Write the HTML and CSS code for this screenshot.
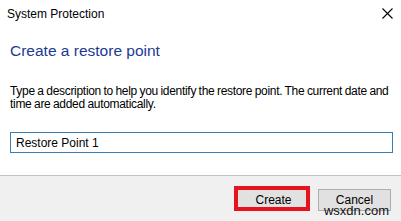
FILE: index.html
```html
<!DOCTYPE html>
<html lang="en">
<head>
    <meta charset="UTF-8">
    <meta name="viewport" content="width=device-width, initial-scale=1.0">
    <title>System Protection</title>
    <link rel="stylesheet" href="styles.css">
</head>
<body>
    <div class="dialog">
        <div class="titlebar">
            <span class="title">System Protection</span>
            <svg class="close" width="11" height="11" viewBox="0 0 11 11">
                <path d="M0.5 0.5 L10.5 10.5 M10.5 0.5 L0.5 10.5" stroke="#000" stroke-width="1.1" fill="none"/>
            </svg>
        </div>
        <div class="content">
            <h1 class="heading">Create a restore point</h1>
            <p class="desc">Type a description to help you identify the restore point. The current date and time are added automatically.</p>
            <input type="text" class="name-input" value="Restore Point 1">
        </div>
        <div class="footer">
            <button class="btn btn-create">Create</button>
            <button class="btn">Cancel</button>
            <span class="watermark">wsxdn.com</span>
        </div>
    </div>
</body>
</html>
```

FILE: styles.css
```css
* {
    box-sizing: border-box;
    margin: 0;
    padding: 0;
}

body {
    font-family: "Liberation Sans", Arial, sans-serif;
    color: #000;
    background: #fff;
    overflow: hidden;
}

.dialog {
    width: 401px;
    height: 221px;
    display: flex;
    flex-direction: column;
}

.titlebar {
    display: flex;
    justify-content: space-between;
    align-items: center;
    height: 27px;
    padding: 0 8px 0 7px;
}

.title {
    font-size: 12px;
    line-height: 16px;
}

.close {
    display: block;
}

.content {
    padding: 0 8px 0 10px;
}

.heading {
    margin-top: 14px;
    font-size: 15.5px;
    line-height: 20px;
    font-weight: normal;
    color: #1c3a94;
}

.desc {
    margin-top: 24px;
    font-size: 12px;
    line-height: 13px;
    letter-spacing: -0.3px;
    word-spacing: -0.5px;
}

.name-input {
    display: block;
    width: 383px;
    height: 21px;
    margin-top: 21px;
    padding: 0 5px;
    border: 1px solid #3a7db3;
    font-family: inherit;
    font-size: 12px;
    color: #000;
    outline: none;
}

.footer {
    position: relative;
    margin-top: auto;
    height: 46px;
    border-top: 1px solid #c2c2c2;
    background: #f0f0f0;
    display: flex;
    justify-content: flex-end;
    align-items: flex-start;
    gap: 8px;
    padding: 13px 10px 0 0;
}

.btn {
    position: relative;
    width: 73px;
    height: 22px;
    background: #e1e1e1;
    border: 1px solid #adadad;
    font-family: inherit;
    font-size: 12px;
    color: #000;
}

.btn-create::after {
    content: "";
    position: absolute;
    top: -4px;
    left: -4px;
    right: -1px;
    bottom: -1px;
    border: 4px solid #e5131d;
}

.watermark {
    position: absolute;
    right: 12px;
    bottom: 4px;
    font-family: "Liberation Sans", Arial, sans-serif;
    font-size: 13px;
    line-height: 13px;
    color: #111;
}
```
